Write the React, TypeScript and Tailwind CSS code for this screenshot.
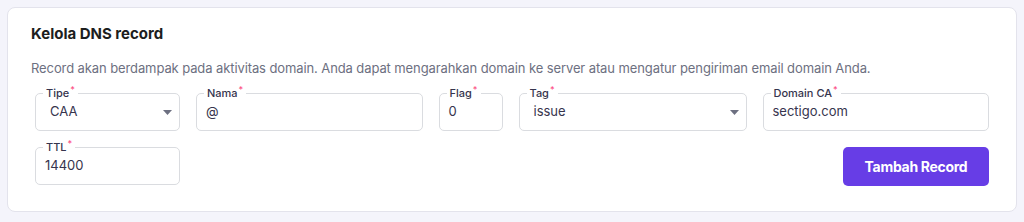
function Field({
  label,
  value,
  select,
  className,
}: {
  label: string;
  value: string;
  select?: boolean;
  className?: string;
}) {
  return (
    <div
      className={`relative flex h-[38px] items-center rounded-[5px] border border-[#dadce0] bg-white ${
        select ? 'pl-[14px] pr-[7px]' : 'px-[9px]'
      } ${className ?? ''}`}
    >
      <span className="absolute -top-[8px] left-[7px] flex bg-white px-[3px] text-[11px] leading-[14px] font-medium text-[#36344d]">
        {label}
        <span className="ml-[1px] -mt-[3px] text-[9px] text-[#fc5185]">*</span>
      </span>
      <span className="flex-1 text-[13px] text-[#36344d]">{value}</span>
      {select && (
        <svg width="9" height="5" viewBox="0 0 9 5" className="text-[#6d7081]">
          <path d="M0 0h9L4.5 5z" fill="currentColor" />
        </svg>
      )}
    </div>
  );
}

export default function App() {
  return (
    <div
      className="h-[222px] w-[1024px] bg-[#f4f4fb] pt-[7px] pl-[7px]"
      style={{ fontFamily: 'Inter, "Noto Sans", sans-serif' }}
    >
      <div className="h-[205px] w-[1010px] rounded-lg border border-[#e3e3ec] bg-white px-[23px] pt-[14px]">
        <h2 className="text-[15px] leading-6 font-bold text-[#1d1e20]">Kelola DNS record</h2>
        <p className="mt-[12px] text-[13px] leading-5 tracking-[-0.1px] text-[#6d7081]">
          Record akan berdampak pada aktivitas domain. Anda dapat mengarahkan domain ke server atau mengatur pengiriman
          email domain Anda.
        </p>
        <div className="mt-[15px] px-[4px]">
          <div className="flex gap-4">
            <Field label="Tipe" value="CAA" select className="w-[145px]" />
            <Field label="Nama" value="@" className="flex-1" />
            <Field label="Flag" value="0" className="w-[64px]" />
            <Field label="Tag" value="issue" select className="w-[228px]" />
            <Field label="Domain CA" value="sectigo.com" className="flex-1" />
          </div>
          <div className="mt-4 flex items-start justify-between">
            <Field label="TTL" value="14400" className="w-[145px]" />
            <button className="h-[39px] w-[146px] rounded-[5px] bg-[#673de6] text-[14px] font-bold tracking-[-0.3px] text-white">
              Tambah Record
            </button>
          </div>
        </div>
      </div>
    </div>
  );
}
